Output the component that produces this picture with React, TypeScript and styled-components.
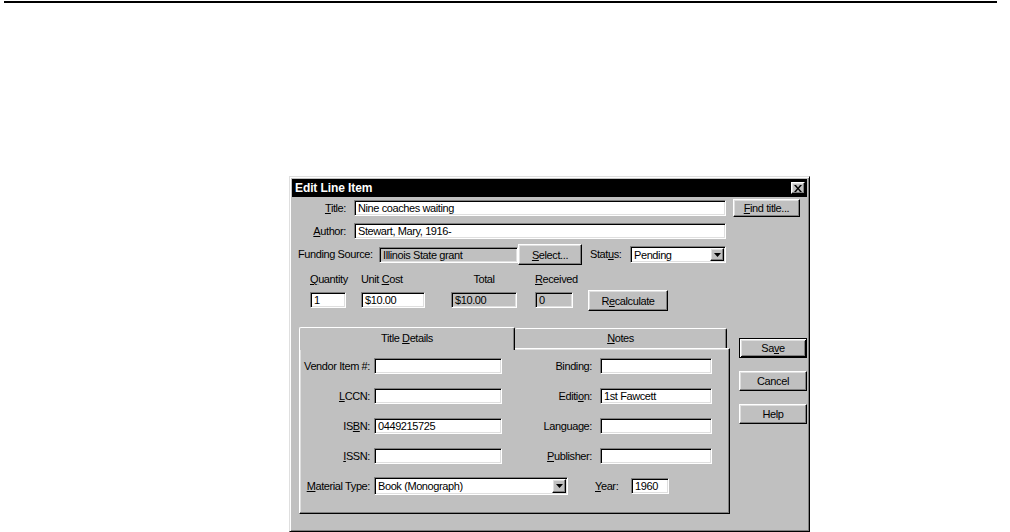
import React from 'react';
import styled, { createGlobalStyle, css } from 'styled-components';

const GlobalStyle = createGlobalStyle`
  html, body {
    margin: 0;
    padding: 0;
    background: #fff;
    overflow: hidden;
  }
  body {
    font-family: "Liberation Sans", Arial, sans-serif;
  }
  u {
    text-underline-offset: 1px;
  }
`;

const raised = css`
  background: #c0c0c0;
  border: 1px solid;
  border-color: #fff #000 #000 #fff;
  box-shadow: inset -1px -1px #808080, inset 1px 1px #dfdfdf;
`;

const sunken = css`
  border: 1px solid;
  border-color: #808080 #fff #fff #808080;
  box-shadow: inset 1px 1px #000, inset -1px -1px #dfdfdf;
`;

const Page = styled.div``;

const TopRule = styled.div`
  height: 2px;
  background: #000;
  margin: 1px 13px 0 4px;
`;

const Figure = styled.div`
  padding: 173px 0 0 289px;
`;

const Dialog = styled.div`
  box-sizing: border-box;
  width: 521px;
  height: 356px;
  padding: 2px;
  background: #c0c0c0;
  border: 1px solid;
  border-color: #dfdfdf #000 #000 #dfdfdf;
  box-shadow: inset 1px 1px #fff, inset -1px -1px #808080;
  font-size: 11px;
  letter-spacing: -0.4px;
  color: #000;
`;

const TitleBar = styled.div`
  height: 18px;
  background: #000;
  color: #fff;
  display: flex;
  align-items: center;
  justify-content: space-between;
  padding: 0 2px 0 3px;
  font-size: 12px;
  font-weight: bold;
  letter-spacing: -0.1px;
`;

const CloseBox = styled.div`
  ${raised};
  box-sizing: border-box;
  width: 14px;
  height: 12px;
  display: flex;
  align-items: center;
  justify-content: center;
`;

const Row = styled.div<{ $top: number; $left?: number }>`
  display: flex;
  align-items: center;
  margin-top: ${(p) => p.$top}px;
  padding-left: ${(p) => p.$left ?? 0}px;
`;

const FieldLabel = styled.div<{ $w: number; $align?: string; $pr?: number }>`
  box-sizing: border-box;
  flex-shrink: 0;
  width: ${(p) => p.$w}px;
  text-align: ${(p) => p.$align ?? 'right'};
  padding-right: ${(p) => p.$pr ?? 0}px;
  white-space: nowrap;
  line-height: 13px;
`;

const TextBox = styled.div<{ $w: number; $h?: number; $ro?: boolean }>`
  ${sunken};
  box-sizing: border-box;
  flex-shrink: 0;
  width: ${(p) => p.$w}px;
  height: ${(p) => p.$h ?? 16}px;
  background: ${(p) => (p.$ro ? '#c0c0c0' : '#fff')};
  padding: 0 3px;
  display: flex;
  align-items: center;
  white-space: nowrap;
  overflow: hidden;
`;

const ComboBox = styled(TextBox)`
  justify-content: space-between;
  padding-right: 1px;
`;

const DropButton = styled.div`
  ${raised};
  box-sizing: border-box;
  width: 14px;
  height: calc(100% - 2px);
  display: flex;
  align-items: center;
  justify-content: center;
`;

const Button = styled.div<{ $w: number; $h: number; $default?: boolean; $ml?: number }>`
  ${raised};
  box-sizing: border-box;
  flex-shrink: 0;
  width: ${(p) => p.$w}px;
  height: ${(p) => p.$h}px;
  margin-left: ${(p) => p.$ml ?? 0}px;
  display: flex;
  align-items: center;
  justify-content: center;
  white-space: nowrap;
  ${(p) =>
    p.$default &&
    css`
      border: 1px solid #000;
      box-shadow: inset 1px 1px #fff, inset -1px -1px #000, inset 2px 2px #dfdfdf,
        inset -2px -2px #808080;
    `}
`;

const CostRow = styled.div`
  display: flex;
  align-items: flex-end;
  margin-top: 8px;
  padding-left: 18px;
`;

const CostField = styled.div<{ $w: number; $ml: number; $align?: string }>`
  display: flex;
  flex-direction: column;
  gap: 6px;
  width: ${(p) => p.$w}px;
  margin-left: ${(p) => p.$ml}px;
  text-align: ${(p) => p.$align ?? 'left'};
`;

const Caption = styled.div`
  line-height: 13px;
  white-space: nowrap;
`;

const RecalcButton = styled(Button)`
  margin-bottom: -3px;
`;

const Lower = styled.div`
  display: flex;
  margin-top: 19px;
  padding-left: 7px;
`;

const TabArea = styled.div`
  width: 431px;
`;

const TabStrip = styled.div`
  display: flex;
  align-items: flex-end;
  height: 21px;
`;

const Tab = styled.div<{ $w: number; $active?: boolean }>`
  box-sizing: border-box;
  position: relative;
  z-index: ${(p) => (p.$active ? 1 : 0)};
  width: ${(p) => p.$w}px;
  height: ${(p) => (p.$active ? 23 : 20)}px;
  margin-bottom: ${(p) => (p.$active ? -2 : 0)}px;
  padding-top: ${(p) => (p.$active ? 4 : 3)}px;
  background: #c0c0c0;
  border-top: 1px solid #fff;
  border-left: ${(p) => (p.$active ? '1px solid #fff' : 'none')};
  border-right: 1px solid #000;
  border-radius: 2px 2px 0 0;
  box-shadow: inset -1px 0 #808080;
  text-align: center;
  line-height: 13px;
`;

const Panel = styled.div`
  box-sizing: border-box;
  height: 166px;
  border: 1px solid;
  border-color: #fff #000 #000 #fff;
  box-shadow: inset -1px -1px #808080, inset 1px 1px #dfdfdf;
  padding-top: 9px;
  display: grid;
  grid-template-columns: 74px 128px 98px 112px;
  grid-auto-rows: 16px;
  row-gap: 14px;
  align-items: center;
`;

const MaterialRow = styled.div`
  grid-column: 1 / -1;
  display: flex;
  align-items: center;
  height: 16px;
`;

const YearLabel = styled.div`
  margin-left: 27px;
  width: 36px;
  line-height: 13px;
`;

const ButtonColumn = styled.div`
  display: flex;
  flex-direction: column;
  gap: 13px;
  margin-left: 9px;
  padding-top: 11px;
  width: 68px;
`;

const Caret = () => (
  <svg width="7" height="4" viewBox="0 0 7 4">
    <path d="M0 0h7L3.5 4z" fill="#000" />
  </svg>
);

const CloseGlyph = () => (
  <svg width="8" height="7" viewBox="0 0 8 7">
    <path d="M0 0h2l2 2.4L6 0h2L5 3.5 8 7H6L4 4.6 2 7H0l3-3.5z" fill="#000" />
  </svg>
);

const App: React.FC = () => {
  return (
    <Page>
      <GlobalStyle />
      <TopRule />
      <Figure>
        <Dialog>
          <TitleBar>
            <span>Edit Line Item</span>
            <CloseBox>
              <CloseGlyph />
            </CloseBox>
          </TitleBar>

          <Row $top={2}>
            <FieldLabel $w={62} $pr={8}>
              <u>T</u>itle:
            </FieldLabel>
            <TextBox $w={372}>Nine coaches waiting</TextBox>
            <Button $w={67} $h={18} $ml={7}>
              <u>F</u>ind title...
            </Button>
          </Row>

          <Row $top={6}>
            <FieldLabel $w={62} $pr={8}>
              <u>A</u>uthor:
            </FieldLabel>
            <TextBox $w={372}>Stewart, Mary, 1916-</TextBox>
          </Row>

          <Row $top={5} $left={6}>
            <FieldLabel $w={81} $align="left">
              Funding Source:
            </FieldLabel>
            <TextBox $w={139} $ro>
              Illinois State grant
            </TextBox>
            <Button $w={64} $h={21}>
              <u>S</u>elect...
            </Button>
            <FieldLabel $w={40} $align="left" style={{ marginLeft: 8 }}>
              Stat<u>u</u>s:
            </FieldLabel>
            <ComboBox $w={96} $h={17}>
              <span>Pending</span>
              <DropButton>
                <Caret />
              </DropButton>
            </ComboBox>
          </Row>

          <CostRow>
            <CostField $w={36} $ml={0}>
              <Caption>
                <u>Q</u>uantity
              </Caption>
              <TextBox $w={36}>1</TextBox>
            </CostField>
            <CostField $w={64} $ml={15}>
              <Caption>
                Unit <u>C</u>ost
              </Caption>
              <TextBox $w={64}>$10.00</TextBox>
            </CostField>
            <CostField $w={66} $ml={26} $align="center">
              <Caption>Total</Caption>
              <TextBox $w={66} $ro>
                $10.00
              </TextBox>
            </CostField>
            <CostField $w={38} $ml={18}>
              <Caption>
                <u>R</u>eceived
              </Caption>
              <TextBox $w={38} $ro>
                0
              </TextBox>
            </CostField>
            <RecalcButton $w={80} $h={21} $ml={15}>
              R<u>e</u>calculate
            </RecalcButton>
          </CostRow>

          <Lower>
            <TabArea>
              <TabStrip>
                <Tab $w={216} $active>
                  Title <u>D</u>etails
                </Tab>
                <Tab $w={212}>
                  <u>N</u>otes
                </Tab>
              </TabStrip>
              <Panel>
                <FieldLabel $w={74} $pr={4}>
                  Vendor Item #:
                </FieldLabel>
                <TextBox $w={128} />
                <FieldLabel $w={98} $pr={8}>
                  Binding:
                </FieldLabel>
                <TextBox $w={112} />

                <FieldLabel $w={74} $pr={4}>
                  <u>L</u>CCN:
                </FieldLabel>
                <TextBox $w={128} />
                <FieldLabel $w={98} $pr={8}>
                  Editi<u>o</u>n:
                </FieldLabel>
                <TextBox $w={112}>1st Fawcett</TextBox>

                <FieldLabel $w={74} $pr={4}>
                  IS<u>B</u>N:
                </FieldLabel>
                <TextBox $w={128}>0449215725</TextBox>
                <FieldLabel $w={98} $pr={8}>
                  Language:
                </FieldLabel>
                <TextBox $w={112} />

                <FieldLabel $w={74} $pr={4}>
                  <u>I</u>SSN:
                </FieldLabel>
                <TextBox $w={128} />
                <FieldLabel $w={98} $pr={8}>
                  <u>P</u>ublisher:
                </FieldLabel>
                <TextBox $w={112} />

                <MaterialRow>
                  <FieldLabel $w={74} $pr={4}>
                    <u>M</u>aterial Type:
                  </FieldLabel>
                  <ComboBox $w={194} $h={18}>
                    <span>Book (Monograph)</span>
                    <DropButton>
                      <Caret />
                    </DropButton>
                  </ComboBox>
                  <YearLabel>
                    <u>Y</u>ear:
                  </YearLabel>
                  <TextBox $w={38}>1960</TextBox>
                </MaterialRow>
              </Panel>
            </TabArea>

            <ButtonColumn>
              <Button $w={68} $h={20} $default>
                Sa<u>v</u>e
              </Button>
              <Button $w={68} $h={20}>
                Cancel
              </Button>
              <Button $w={68} $h={20}>
                Help
              </Button>
            </ButtonColumn>
          </Lower>
        </Dialog>
      </Figure>
    </Page>
  );
};

export default App;
